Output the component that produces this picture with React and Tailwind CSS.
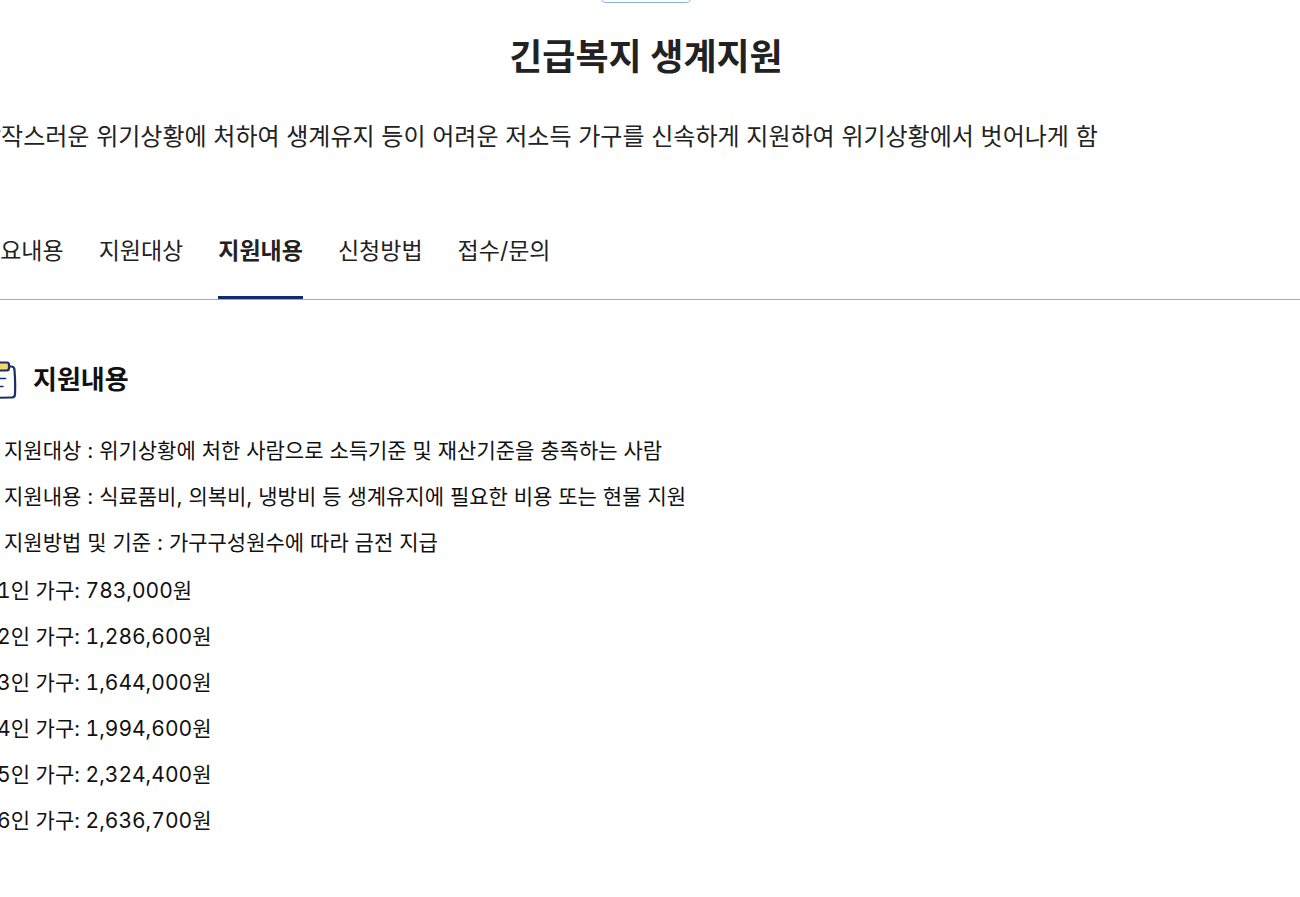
const tabs = ["주요내용", "지원대상", "지원내용", "신청방법", "접수/문의"];

const details = [
  "지원대상 : 위기상황에 처한 사람으로 소득기준 및 재산기준을 충족하는 사람",
  "지원내용 : 식료품비, 의복비, 냉방비 등 생계유지에 필요한 비용 또는 현물 지원",
  "지원방법 및 기준 : 가구구성원수에 따라 금전 지급",
];

const amounts = [
  { size: 1, amount: "783,000" },
  { size: 2, amount: "1,286,600" },
  { size: 3, amount: "1,644,000" },
  { size: 4, amount: "1,994,600" },
  { size: 5, amount: "2,324,400" },
  { size: 6, amount: "2,636,700" },
];

function ClipboardIcon() {
  return (
    <svg
      viewBox="0 0 40 40"
      className="h-10 w-10 shrink-0"
      fill="none"
      stroke="#1b2f66"
      strokeWidth="2.2"
      strokeLinecap="round"
      strokeLinejoin="round"
      aria-hidden="true"
    >
      <path d="M12 6H8Q5 6 5 9.500L4.500 35q0 3 3 3l25.500-.5q3 0 3-3.500.5-12-.5-24 0-3.500-3.500-3.500H29" fill="#fff" />
      <path d="M13 4.500Q13 2.500 15 2.500h12.500q2.500 0 2.500 2V8q0 2.500-2.500 2.500H15q-2 0-2-2.500z" fill="#f3d96b" />
      <path d="M11 18.500h15.500M11 26.500h13" strokeWidth="1.500" />
    </svg>
  );
}

export default function App() {
  return (
    <div className="min-h-screen overflow-hidden bg-white font-['Inter','Noto_Sans_CJK_KR',sans-serif] text-[#222]">
      <main className="-mr-[13px] -ml-[21px]">
        <header className="flex flex-col items-center">
          <div className="-mt-8 h-[35px] w-[92px] rounded-md border border-[#86b3dc]" />
          <h1 className="mt-7 text-4xl leading-[52px] font-bold">긴급복지 생계지원</h1>
          <p className="mt-9 self-start text-2xl leading-9 whitespace-nowrap">
            갑작스러운 위기상황에 처하여 생계유지 등이 어려운 저소득 가구를 신속하게 지원하여 위기상황에서 벗어나게 함
          </p>
        </header>

        <nav className="mt-12 border-b border-[#aaa]">
          <ul className="flex gap-[35px]">
            {tabs.map((tab) => (
              <li key={tab}>
                <a
                  href="#support"
                  aria-current={tab === "지원내용" ? "true" : undefined}
                  className={
                    tab === "지원내용"
                      ? "block h-24 border-b-[3px] border-[#132c68] pt-[30px] text-[23px] leading-9 font-bold"
                      : "block h-24 pt-[30px] text-[23px] leading-9"
                  }
                >
                  {tab}
                </a>
              </li>
            ))}
          </ul>
        </nav>

        <section id="support" className="pt-15 text-[#111]">
          <div className="flex items-center gap-3.5">
            <ClipboardIcon />
            <h2 className="text-[26px] leading-10 font-bold">지원내용</h2>
          </div>
          <ul className="mt-7 text-[21px] leading-[46px]">
            {details.map((text) => (
              <li key={text} className="flex">
                <span className="w-[25px] shrink-0">○</span>
                {text}
              </li>
            ))}
          </ul>
          <ul className="mt-[2px] text-[21px] leading-[46px] tabular-nums">
            {amounts.map(({ size, amount }) => (
              <li key={size} className="flex">
                <span className="w-[18px] shrink-0">-</span>
                {size}인 가구: {amount}원
              </li>
            ))}
          </ul>
        </section>
      </main>
    </div>
  );
}
